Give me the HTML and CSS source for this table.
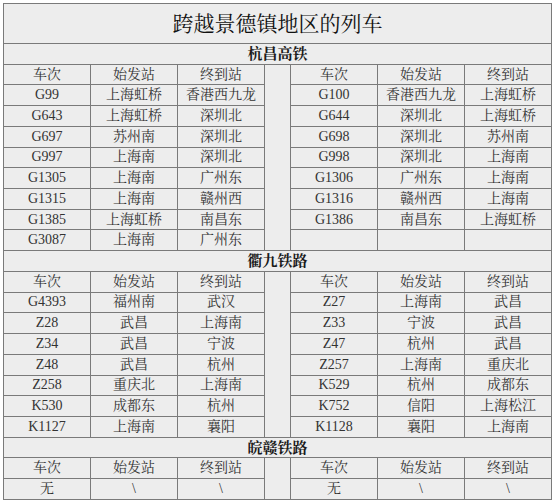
FILE: index.html
```html
<!DOCTYPE html>
<html lang="zh-CN">
<head>
<meta charset="utf-8">
<title>跨越景德镇地区的列车</title>
<link rel="stylesheet" href="styles.css">
</head>
<body>
<table class="trains">
  <colgroup>
    <col class="c"><col class="c"><col class="c"><col class="sp"><col class="c"><col class="c"><col class="c">
  </colgroup>
  <tbody>
    <tr class="title"><td colspan="7">跨越景德镇地区的列车</td></tr>

    <tr class="sec"><td colspan="7">杭昌高铁</td></tr>
    <tr><td>车次</td><td>始发站</td><td>终到站</td><td class="gap" rowspan="9"></td><td>车次</td><td>始发站</td><td>终到站</td></tr>
    <tr><td>G99</td><td>上海虹桥</td><td>香港西九龙</td><td>G100</td><td>香港西九龙</td><td>上海虹桥</td></tr>
    <tr><td>G643</td><td>上海虹桥</td><td>深圳北</td><td>G644</td><td>深圳北</td><td>上海虹桥</td></tr>
    <tr><td>G697</td><td>苏州南</td><td>深圳北</td><td>G698</td><td>深圳北</td><td>苏州南</td></tr>
    <tr><td>G997</td><td>上海南</td><td>深圳北</td><td>G998</td><td>深圳北</td><td>上海南</td></tr>
    <tr><td>G1305</td><td>上海南</td><td>广州东</td><td>G1306</td><td>广州东</td><td>上海南</td></tr>
    <tr><td>G1315</td><td>上海南</td><td>赣州西</td><td>G1316</td><td>赣州西</td><td>上海南</td></tr>
    <tr><td>G1385</td><td>上海虹桥</td><td>南昌东</td><td>G1386</td><td>南昌东</td><td>上海虹桥</td></tr>
    <tr><td>G3087</td><td>上海南</td><td>广州东</td><td></td><td></td><td></td></tr>

    <tr class="sec"><td colspan="7">衢九铁路</td></tr>
    <tr><td>车次</td><td>始发站</td><td>终到站</td><td class="gap" rowspan="8"></td><td>车次</td><td>始发站</td><td>终到站</td></tr>
    <tr><td>G4393</td><td>福州南</td><td>武汉</td><td>Z27</td><td>上海南</td><td>武昌</td></tr>
    <tr><td>Z28</td><td>武昌</td><td>上海南</td><td>Z33</td><td>宁波</td><td>武昌</td></tr>
    <tr><td>Z34</td><td>武昌</td><td>宁波</td><td>Z47</td><td>杭州</td><td>武昌</td></tr>
    <tr><td>Z48</td><td>武昌</td><td>杭州</td><td>Z257</td><td>上海南</td><td>重庆北</td></tr>
    <tr><td>Z258</td><td>重庆北</td><td>上海南</td><td>K529</td><td>杭州</td><td>成都东</td></tr>
    <tr><td>K530</td><td>成都东</td><td>杭州</td><td>K752</td><td>信阳</td><td>上海松江</td></tr>
    <tr><td>K1127</td><td>上海南</td><td>襄阳</td><td>K1128</td><td>襄阳</td><td>上海南</td></tr>

    <tr class="sec"><td colspan="7">皖赣铁路</td></tr>
    <tr><td>车次</td><td>始发站</td><td>终到站</td><td class="gap" rowspan="2"></td><td>车次</td><td>始发站</td><td>终到站</td></tr>
    <tr><td>无</td><td>\</td><td>\</td><td>无</td><td>\</td><td>\</td></tr>
  </tbody>
</table>
</body>
</html>
```

FILE: styles.css
```css
html, body {
  margin: 0;
  padding: 0;
  background: #ffffff;
}

body {
  padding: 3px;
}

.trains {
  border-collapse: collapse;
  table-layout: fixed;
  width: 548px;
  background: #ededed;
  font-family: "Liberation Serif", "Noto Serif CJK SC", "Noto Sans CJK SC", serif;
  font-size: 14px;
  color: #333333;
}

.trains col.c {
  width: 87px;
}

.trains col.sp {
  width: 26px;
}

.trains td {
  border: 1px solid #7a7a7a;
  padding: 0;
  text-align: center;
  vertical-align: middle;
  line-height: 18px;
  white-space: nowrap;
  overflow: hidden;
}

.trains tr {
  height: 20.73px;
}

.trains tr.title {
  height: 40px;
}

.trains tr.title td {
  font-size: 21px;
  color: #111111;
  line-height: 28px;
}

.trains tr.sec td {
  font-size: 15px;
  font-weight: bold;
  color: #1a1a1a;
}
```
